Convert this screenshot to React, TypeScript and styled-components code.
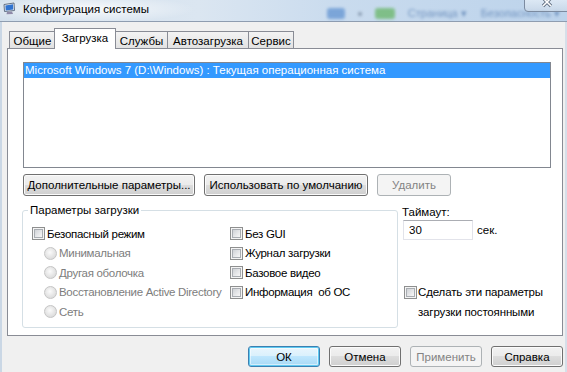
import React from "react";
import styled, { createGlobalStyle, css } from "styled-components";

const GlobalStyle = createGlobalStyle`
  html, body {
    margin: 0;
    padding: 0;
    background: #f0f0f0;
  }
  body {
    font-family: "Liberation Sans", Arial, sans-serif;
    font-size: 11.5px;
    color: #000;
  }
  * { box-sizing: border-box; }
`;

const Window = styled.div`
  position: relative;
  width: 567px;
  height: 372px;
  display: flex;
  flex-direction: column;
  overflow: hidden;
  background: #f0f0f0;
`;

const TitleBar = styled.div`
  flex: none;
  height: 22px;
  display: flex;
  align-items: flex-start;
  border-bottom: 1px solid #8f9db0;
  background:
    radial-gradient(ellipse 110px 14px at 85px 9px, rgba(255, 255, 255, 0.85), rgba(255, 255, 255, 0) 100%),
    linear-gradient(90deg, #d3e0ec 0%, #dbe6f1 35%, #c9dbee 60%, #bcd3eb 100%);
`;

const AppIcon = styled.svg`
  flex: none;
  margin: 2px 0 0 3px;
`;

const Title = styled.span`
  margin-left: 7px;
  line-height: 18px;
  font-size: 11.5px;
  color: #000;
`;

const Ghosts = styled.div`
  margin-left: auto;
  margin-right: 7px;
  margin-top: 7px;
  display: flex;
  align-items: center;
  filter: blur(1.4px);
  opacity: 0.7;
`;

const Blob = styled.span<{ $c: string; $w: number; $gap: number }>`
  display: block;
  width: ${(p) => p.$w}px;
  height: ${(p) => (p.$w > 6 ? 11 : 4)}px;
  margin-left: ${(p) => p.$gap}px;
  border-radius: 3px;
  background: ${(p) => p.$c};
`;

const GhostText = styled.span<{ $gap: number }>`
  margin-left: ${(p) => p.$gap}px;
  font-size: 11px;
  color: #4f77ad;
  white-space: nowrap;
`;

const CloseBox = styled.div`
  position: absolute;
  top: -1px;
  left: 524px;
  width: 46px;
  height: 13px;
  border: 1px solid #7c8ba0;
  border-radius: 0 0 0 4px;
  background: linear-gradient(180deg, rgba(240, 245, 250, 0.6), rgba(205, 218, 232, 0.7));
  display: flex;
  justify-content: center;
`;

const Client = styled.div`
  flex: 1;
  display: flex;
  flex-direction: column;
  padding: 6px 2px 0 5px;
  border-left: 2px solid #cad7e5;
  border-right: 2px solid #d6dfe9;
`;

const TabRow = styled.div`
  display: flex;
  align-items: flex-end;
  height: 21px;
  margin: 0 0 -1px 2px;
  position: relative;
  z-index: 1;
`;

const Tab = styled.div<{ $w: number; $active?: boolean }>`
  width: ${(p) => p.$w}px;
  height: 17px;
  margin-bottom: 1px;
  margin-left: -1px;
  border: 1px solid #898c95;
  border-bottom: none;
  background: linear-gradient(180deg, #f3f3f3 0%, #ebebeb 50%, #e2e2e2 100%);
  display: flex;
  align-items: center;
  justify-content: center;
  line-height: 14px;
  padding-top: 1px;
  white-space: nowrap;
  &:first-child {
    margin-left: 0;
  }
  ${(p) =>
    p.$active &&
    css`
      height: 21px;
      margin-bottom: 0;
      margin-left: -2px;
      background: #fff;
      position: relative;
      z-index: 2;
      align-items: flex-start;
      padding-top: 2px;
    `}
`;

const Panel = styled.div`
  height: 288px;
  border: 1px solid #898c95;
  background: #fff;
  padding: 13px 11px 0 15px;
  display: flex;
  flex-direction: column;
`;

const ListBox = styled.div`
  height: 106px;
  border: 1px solid #828790;
  background: #fff;
`;

const ListItem = styled.div<{ $selected?: boolean }>`
  height: 15px;
  line-height: 15px;
  padding-left: 1px;
  white-space: nowrap;
  ${(p) =>
    p.$selected &&
    css`
      background: #3399ff;
      color: #fff;
    `}
`;

const ButtonRow = styled.div`
  display: flex;
  gap: 9px;
  margin-top: 6px;
`;

const Button = styled.button<{ $w: number; $h?: number; $kind?: "default" | "disabled" }>`
  flex: none;
  width: ${(p) => p.$w}px;
  height: ${(p) => p.$h ?? 22}px;
  padding: 0;
  font: inherit;
  color: #000;
  white-space: nowrap;
  border: 1px solid #707070;
  border-radius: 3px;
  background: linear-gradient(180deg, #f2f2f2 0%, #ebebeb 50%, #dddddd 50%, #cfcfcf 100%);
  box-shadow: inset 0 0 0 1px #fbfbfb;
  display: flex;
  align-items: center;
  justify-content: center;
  ${(p) =>
    p.$kind === "default" &&
    css`
      border-color: #3c7fb1;
      background: linear-gradient(180deg, #eaf6fd 0%, #d9f0fc 50%, #bee6fd 50%, #a7d9f5 100%);
      box-shadow: inset 0 0 0 1px #5fcaf1, inset 0 0 0 2px rgba(255, 255, 255, 0.5);
    `}
  ${(p) =>
    p.$kind === "disabled" &&
    css`
      border-color: #adb2b5;
      background: #f4f4f4;
      box-shadow: none;
      color: #838383;
    `}
`;

const Bottom = styled.div`
  display: flex;
  margin-top: 6px;
`;

const Group = styled.fieldset`
  flex: none;
  width: 376px;
  height: 126px;
  margin: 0 0 0 -1px;
  padding: 0;
  border: 1px solid #d5dfe5;
  border-radius: 3px;
  min-width: 0;
`;

const Legend = styled.legend`
  margin-left: 5px;
  padding: 0 2px;
  line-height: 16px;
`;

const GroupBody = styled.div`
  display: grid;
  grid-template-columns: 198px 1fr;
  padding: 6px 0 0 9px;
`;

const Column = styled.div`
  display: flex;
  flex-direction: column;
`;

const Row = styled.div<{ $indent?: number; $disabled?: boolean }>`
  height: 19.5px;
  display: flex;
  align-items: center;
  gap: 2px;
  padding-left: ${(p) => p.$indent ?? 0}px;
  color: ${(p) => (p.$disabled ? "#7d7d7d" : "#000")};
  letter-spacing: -0.3px;
  white-space: pre;
`;

const CheckBox = styled.span`
  flex: none;
  position: relative;
  width: 13px;
  height: 13px;
  border: 1px solid #8e8f8f;
  background: #f4f4f4;
  &::after {
    content: "";
    position: absolute;
    inset: 1px;
    border: 1px solid #a9adb2;
    background: linear-gradient(135deg, #cfd2d6 0%, #e6e7e9 55%, #f7f7f7 100%);
  }
`;

const Radio = styled.span`
  flex: none;
  width: 13px;
  height: 13px;
  border-radius: 50%;
  border: 1px solid #c5c5c5;
  background: radial-gradient(circle at 45% 40%, #fbfbfb 0%, #e4e4e4 55%, #d2d2d2 100%);
`;

const Side = styled.div`
  flex: 1;
  display: flex;
  flex-direction: column;
  margin-left: 4px;
  white-space: nowrap;
`;

const Label = styled.div`
  margin-top: 2px;
  line-height: 16px;
`;

const InputRow = styled.div`
  display: flex;
  align-items: center;
  gap: 4px;
  margin-left: 1px;
`;

const TextInput = styled.div`
  width: 70px;
  height: 20px;
  border: 1px solid #e2e3ea;
  border-top-color: #abadb3;
  background: #fff;
  padding-left: 5px;
  line-height: 18px;
`;

const Persist = styled.div`
  display: flex;
  align-items: flex-start;
  gap: 1px;
  margin: 43px 0 0 2px;
  letter-spacing: -0.15px;
  ${CheckBox} {
    margin-top: 3px;
  }
`;

const PersistText = styled.div`
  line-height: 19.5px;
`;

const Footer = styled.div`
  display: flex;
  justify-content: flex-end;
  gap: 9px;
  margin-top: 10px;
`;

const tabs = [
  { name: "Общие", w: 47 },
  { name: "Загрузка", w: 62, active: true },
  { name: "Службы", w: 53 },
  { name: "Автозагрузка", w: 82 },
  { name: "Сервис", w: 46 },
];

const safeModes = ["Минимальная", "Другая оболочка", "Восстановление Active Directory", "Сеть"];
const flags = ["Без GUI", "Журнал загрузки", "Базовое видео", "Информация  об ОС"];

export default function App() {
  return (
    <>
      <GlobalStyle />
      <Window>
        <TitleBar>
          <AppIcon width="13" height="13" viewBox="0 0 13 13">
            <path d="M1 2.5 L11 1 L11.5 8.5 L1.5 9.5 Z" fill="#e8edf3" stroke="#55647a" strokeWidth="0.9" />
            <path d="M2.4 3.4 L10 2.3 L10.3 7.6 L2.7 8.4 Z" fill="#2f73d0" />
            <path d="M4 10 L9 9.5 L10 12 L3.5 12.3 Z" fill="#8f8aa8" />
          </AppIcon>
          <Title>Конфигурация системы</Title>
          <Ghosts>
            <Blob $c="#5b8fd0" $w={18} $gap={0} />
            <Blob $c="#6d7f95" $w={4} $gap={13} />
            <Blob $c="#62b45e" $w={20} $gap={13} />
            <GhostText $gap={13}>Страница ▾</GhostText>
            <GhostText $gap={14}>Безопасность ▾</GhostText>
          </Ghosts>
          <CloseBox>
            <svg width="12" height="8" viewBox="0 0 12 8">
              <path d="M2 -2 L10 6 M10 -2 L2 6" stroke="#5d6b7d" strokeWidth="3.2" />
              <path d="M2 -2 L10 6 M10 -2 L2 6" stroke="#fff" strokeWidth="1.6" />
            </svg>
          </CloseBox>
        </TitleBar>

        <Client>
          <TabRow>
            {tabs.map((t) => (
              <Tab key={t.name} $w={t.w} $active={t.active}>
                {t.name}
              </Tab>
            ))}
          </TabRow>

          <Panel>
            <ListBox>
              <ListItem $selected>Microsoft Windows 7 (D:\Windows) : Текущая операционная система</ListItem>
            </ListBox>

            <ButtonRow>
              <Button $w={172}>Дополнительные параметры...</Button>
              <Button $w={164}>Использовать по умолчанию</Button>
              <Button $w={74} $kind="disabled">
                Удалить
              </Button>
            </ButtonRow>

            <Bottom>
              <Group>
                <Legend>Параметры загрузки</Legend>
                <GroupBody>
                  <Column>
                    <Row>
                      <CheckBox />
                      Безопасный режим
                    </Row>
                    {safeModes.map((m) => (
                      <Row key={m} $indent={12} $disabled>
                        <Radio />
                        {m}
                      </Row>
                    ))}
                  </Column>
                  <Column>
                    {flags.map((f) => (
                      <Row key={f}>
                        <CheckBox />
                        {f}
                      </Row>
                    ))}
                  </Column>
                </GroupBody>
              </Group>

              <Side>
                <Label>Таймаут:</Label>
                <InputRow>
                  <TextInput>30</TextInput>
                  сек.
                </InputRow>
                <Persist>
                  <CheckBox />
                  <PersistText>
                    Сделать эти параметры
                    <br />
                    загрузки постоянными
                  </PersistText>
                </Persist>
              </Side>
            </Bottom>
          </Panel>

          <Footer>
            <Button $w={72} $h={21} $kind="default">
              ОК
            </Button>
            <Button $w={72} $h={21}>
              Отмена
            </Button>
            <Button $w={72} $h={21} $kind="disabled">
              Применить
            </Button>
            <Button $w={72} $h={21}>
              Справка
            </Button>
          </Footer>
        </Client>
      </Window>
    </>
  );
}
